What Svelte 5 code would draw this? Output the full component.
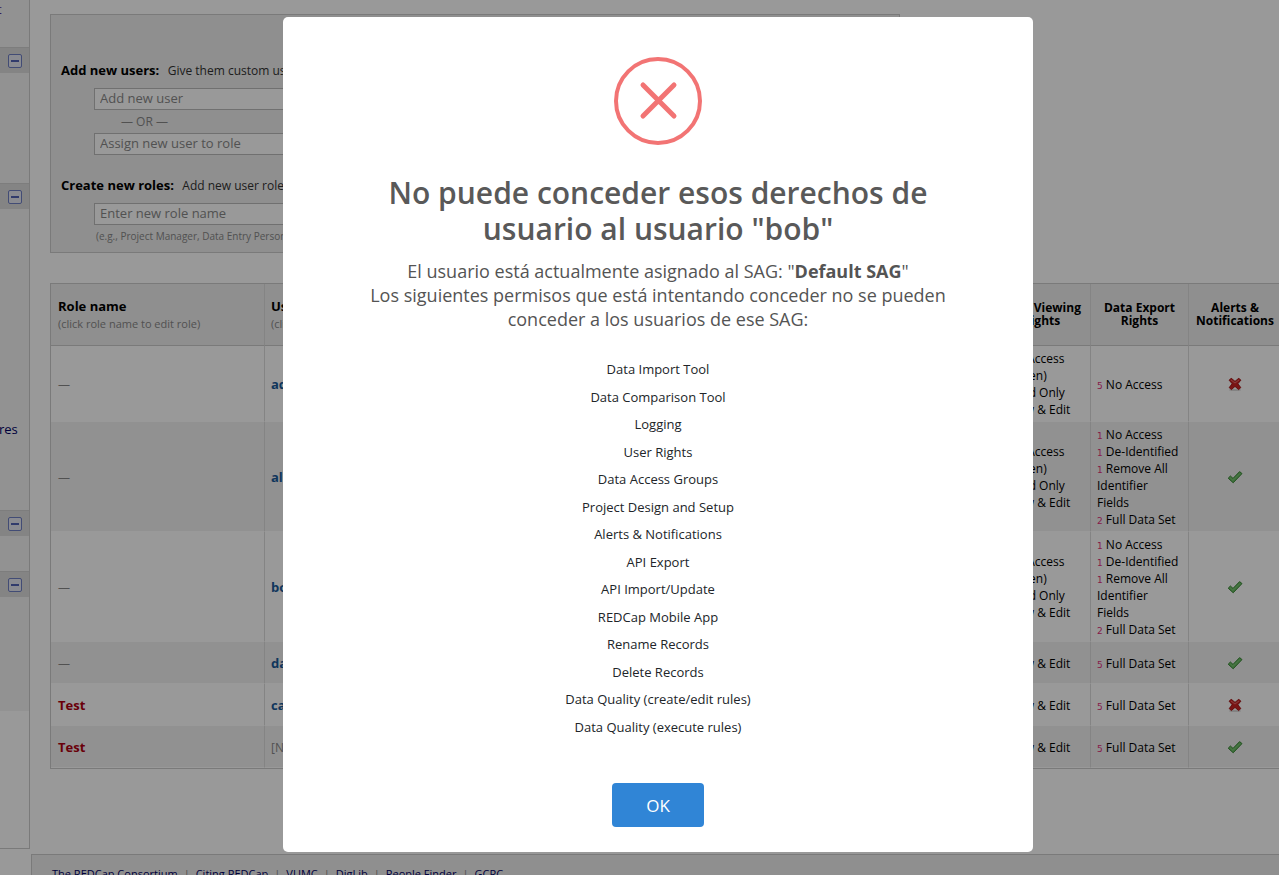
<script>
  const panels = [
    { size: 'first', link: 't', visited: true },
    { size: 'second' },
    { size: 'third', link: 'res' },
    { size: 'fourth' },
    { size: 'fifth' }
  ];

  const viewing = [
    { n: 1, label: 'No Access (Hidden)' },
    { n: 1, label: 'Read Only' },
    { n: 3, label: 'View & Edit' }
  ];
  const viewAll = [{ n: 5, label: 'View & Edit' }];
  const exportMix = [
    { n: 1, label: 'No Access' },
    { n: 1, label: 'De-Identified' },
    { n: 1, label: 'Remove All Identifier Fields' },
    { n: 2, label: 'Full Data Set' }
  ];
  const exportAll = [{ n: 5, label: 'Full Data Set' }];

  const rows = [
    { user: 'admin', view: viewing, exp: [{ n: 5, label: 'No Access' }], alerts: false },
    { user: 'alice', view: viewing, exp: exportMix, alerts: true },
    { user: 'bob', view: viewing, exp: exportMix, alerts: true },
    { user: 'dave', view: viewAll, exp: exportAll, alerts: true },
    { role: 'Test', user: 'carol', view: viewAll, exp: exportAll, alerts: false },
    { role: 'Test', view: viewAll, exp: exportAll, alerts: true }
  ];

  const permissions = [
    'Data Import Tool',
    'Data Comparison Tool',
    'Logging',
    'User Rights',
    'Data Access Groups',
    'Project Design and Setup',
    'Alerts & Notifications',
    'API Export',
    'API Import/Update',
    'REDCap Mobile App',
    'Rename Records',
    'Delete Records',
    'Data Quality (create/edit rules)',
    'Data Quality (execute rules)'
  ];

  const footerLinks = ['The REDCap Consortium', 'Citing REDCap', 'VUMC', 'DigLib', 'People Finder', 'GCRC'];

  let open = $state(true);
</script>

{#snippet rights(list)}
  <ul class="rights">
    {#each list as item}
      <li><span class="count">{item.n}</span> {item.label}</li>
    {/each}
  </ul>
{/snippet}

<div class="page">
  <nav class="sidebar" aria-label="Menu">
    {#each panels as panel, i}
      {#if i > 0}
        <div class="bar">
          <button class="toggle" aria-label="Collapse section">
            <svg width="16" height="16" viewBox="0 0 16 16" aria-hidden="true">
              <rect x="1.5" y="1.5" width="13" height="13" rx="1.5" fill="#e6e8f2" stroke="#6f7fc4" />
              <rect x="4" y="7" width="8" height="2" fill="#5263b4" />
            </svg>
          </button>
        </div>
      {/if}
      <div class="menu {panel.size}">
        {#if panel.link}<a href="#menu" class:visited={panel.visited}>{panel.link}</a>{/if}
      </div>
    {/each}
  </nav>

  <div class="content">
    <main>
      <section class="forms">
        <div class="line"><b>Add new users:</b> <span>Give them custom user rights or assign them to a role.</span></div>
        <div class="fields">
          <input type="text" aria-label="Add new user" placeholder="Add new user" />
          <div class="or">— OR —</div>
          <input type="text" aria-label="Assign new user to role" placeholder="Assign new user to role" />
        </div>
        <div class="line roles"><b>Create new roles:</b> <span>Add new user roles to which users may be assigned.</span></div>
        <div class="fields">
          <input type="text" aria-label="Enter new role name" placeholder="Enter new role name" />
          <div class="hint">(e.g., Project Manager, Data Entry Person)</div>
        </div>
      </section>

      <table>
        <colgroup>
          <col class="c-role" />
          <col />
          <col class="c-data" />
          <col class="c-data" />
          <col class="c-mark" />
        </colgroup>
        <thead>
          <tr>
            <th class="left">Role name<small>(click role name to edit role)</small></th>
            <th class="left">Username<small>(click username to edit)</small></th>
            <th>Data Viewing Rights</th>
            <th>Data Export Rights</th>
            <th class="tight">Alerts &amp; Notifications</th>
          </tr>
        </thead>
        <tbody>
          {#each rows as row}
            <tr>
              <td>{#if row.role}<a class="role" href="#role">{row.role}</a>{:else}<span class="dash">—</span>{/if}</td>
              <td>{#if row.user}<a class="user" href="#user">{row.user}</a>{:else}<span class="none">[No users assigned]</span>{/if}</td>
              <td>{@render rights(row.view)}</td>
              <td>{@render rights(row.exp)}</td>
              <td class="mark">
                {#if row.alerts}
                  <svg width="16" height="16" viewBox="0 0 16 16" role="img" aria-label="Yes">
                    <path d="M1.2 9.2 3.400 7 6 9.400 12.600 2.600 15 4.600 6.200 13.800Z" fill="#65b85f" stroke="#3c8a38" stroke-linejoin="round" />
                    <path d="M3.200 8.800 6 11.400 13 4.400" fill="none" stroke="#83cc7c" />
                  </svg>
                {:else}
                  <svg width="16" height="16" viewBox="0 0 16 16" role="img" aria-label="No">
                    <ellipse cx="8" cy="14" rx="6" ry="1" fill="#000" opacity=".15" />
                    <path d="M4.200 2.200 8 5.400 11.800 2.200 13.800 4.200 10.800 7.800 13.800 11.600 11.600 13.600 8 10.400 4.400 13.600 2.200 11.600 5.200 7.800 2.200 4.200Z" fill="#cc2222" stroke="#a31515" stroke-linejoin="round" />
                    <path d="M4 4 8 7 12 4" fill="none" stroke="#e86a6a" />
                  </svg>
                {/if}
              </td>
            </tr>
          {/each}
        </tbody>
      </table>
    </main>

    <footer>
      {#each footerLinks as link, i}
        {#if i > 0}<span>|</span>{/if}<a href="#footer">{link}</a>
      {/each}
    </footer>
  </div>
</div>

{#if open}
  <div class="overlay">
    <div class="modal" role="dialog" aria-modal="true" aria-labelledby="modal-title">
      <svg class="error" width="88" height="88" viewBox="0 0 88 88" aria-hidden="true">
        <circle cx="44" cy="44" r="42" fill="none" stroke="#f27474" stroke-width="4" />
        <path d="M29 28 60 59M60 28 29 59" stroke="#f27474" stroke-width="5" stroke-linecap="round" />
      </svg>
      <h2 id="modal-title">No puede conceder esos derechos de usuario al usuario "bob"</h2>
      <p>
        El usuario está actualmente asignado al SAG: "<b>Default SAG</b>"<br />
        Los siguientes permisos que está intentando conceder no se pueden conceder a los usuarios de ese SAG:
      </p>
      <ul class="permissions">
        {#each permissions as name}<li>{name}</li>{/each}
      </ul>
      <button class="ok" onclick={() => (open = false)}>OK</button>
    </div>
  </div>
{/if}

<style>
  :global(body) {
    background: #fff;
    color: #000;
    font-family: 'Open Sans', sans-serif;
    font-size: 13px;
  }
  * {
    box-sizing: border-box;
  }
  a {
    text-decoration: none;
  }
  ul {
    list-style: none;
    margin: 0;
    padding: 0;
  }

  .page {
    display: grid;
    grid-template-columns: 30px minmax(0, 1fr);
    align-items: start;
    height: 100vh;
    overflow: hidden;
  }

  .sidebar {
    border: solid #ccc;
    border-width: 0 1px 1px 0;
    padding-bottom: 137px;
    overflow: hidden;
  }
  .bar {
    height: 26px;
    padding: 5px 6px 0 7px;
    border-top: 1px solid #d0d0d0;
    background: #dcdcdc;
  }
  .toggle {
    display: block;
    padding: 0;
    border: 0;
    background: none;
  }
  .toggle svg {
    display: block;
  }
  .menu {
    display: flex;
    background: #f3f3f3;
    line-height: 18px;
  }
  .menu a {
    margin-left: -1px;
    color: #000066;
  }
  .menu a.visited {
    margin-left: -3px;
    color: #551a8b;
  }
  .first { height: 47px; }
  .second { height: 110px; }
  .third { height: 301px; padding-top: 211px; }
  .fourth { height: 35px; }
  .fifth { height: 114px; }

  main {
    height: 854px;
    padding: 14px 0 0 20px;
  }
  .forms {
    max-width: 850px;
    height: 239px;
    padding: 45px 10px 0;
    border: 1px solid #ccc;
    background: #eee;
  }
  .line {
    line-height: 20px;
  }
  .line span {
    margin-left: 5px;
    color: #333;
    font-size: 12px;
  }
  .roles {
    margin-top: 20px;
  }
  .fields {
    padding: 7px 0 0 33px;
  }
  input {
    display: block;
    width: 240px;
    height: 22px;
    padding: 0 5px 2px;
    border: 1px solid #bbb;
    background: #fff;
    font: 13px 'Open Sans', sans-serif;
  }
  input::placeholder {
    color: #888;
    opacity: 1;
  }
  .or {
    padding-left: 27px;
    color: #888;
    font-size: 12px;
    line-height: 23px;
  }
  .hint {
    padding: 3px 0 0 2px;
    color: #888;
    font-size: 10px;
    line-height: 16px;
  }

  table {
    width: calc(100% + 4px);
    margin-top: 30px;
    border: 1px solid #ccc;
    border-spacing: 0;
    table-layout: fixed;
  }
  .c-role { width: 214px; }
  .c-data { width: 98px; }
  .c-mark { width: 93px; }
  th {
    height: 62px;
    padding: 0 6px 2px;
    border-right: 1px solid #ddd;
    border-bottom: 1px solid #ccc;
    background: #eee;
    font-size: 12px;
    line-height: 13px;
  }
  th.left {
    padding-bottom: 0;
    font-size: 13px;
    line-height: 18px;
    text-align: left;
  }
  th.tight {
    padding: 0 0 2px;
  }
  small {
    display: block;
    color: #888;
    font-size: 11px;
    font-weight: 400;
    line-height: 18px;
  }
  td {
    height: 42px;
    padding: 4px 6px 3px;
    border-right: 1px solid #ddd;
    border-bottom: 1px solid #fff;
    line-height: 17px;
  }
  th:first-child,
  td:first-child {
    padding-left: 7px;
  }
  tbody tr:nth-child(even) td {
    background: #f2f2f2;
  }
  .rights {
    font-size: 12px;
  }
  .count {
    color: #e0307a;
    font-family: 'DejaVu Sans', sans-serif;
    font-size: 9px;
    line-height: 1;
  }
  .dash,
  .none {
    display: block;
    color: #888;
    font-size: 12px;
  }
  .user {
    color: #1a5a9a;
    font-weight: 700;
  }
  .role {
    color: #b00010;
    font-weight: 700;
  }
  .mark {
    text-align: center;
  }
  .mark svg {
    display: block;
    margin: 0 auto;
  }

  footer {
    margin-left: 1px;
    padding: 10px 20px;
    border: solid #ccc;
    border-width: 1px 0 0 1px;
    background: #eee;
    font-size: 11px;
    line-height: 18px;
  }
  footer a {
    color: #000066;
  }
  footer span {
    margin: 0 6px;
    color: #888;
  }

  .overlay {
    position: fixed;
    inset: 0;
    display: flex;
    align-items: flex-start;
    justify-content: center;
    padding: 17px 0 17px 37px;
    background: rgba(0, 0, 0, 0.4);
  }
  .modal {
    display: flex;
    flex-direction: column;
    align-items: center;
    width: 750px;
    padding: 40px 80px 25px;
    border-radius: 5px;
    background: #fff;
    text-align: center;
  }
  .error {
    display: block;
  }
  h2 {
    margin: 30px 0 12px;
    color: #595959;
    font-size: 30px;
    font-weight: 600;
    line-height: 36px;
  }
  p {
    margin: 0;
    color: #545454;
    font-size: 18px;
    line-height: 24px;
  }
  .permissions {
    margin: 29px 0 38px;
    color: #212529;
    line-height: 1.5;
  }
  .permissions li {
    margin-bottom: 8px;
  }
  .ok {
    height: 44px;
    padding: 0 34px;
    border: 0;
    border-radius: 4px;
    background: #3085d6;
    color: #fff;
    font: 17px 'Open Sans', sans-serif;
  }
</style>
